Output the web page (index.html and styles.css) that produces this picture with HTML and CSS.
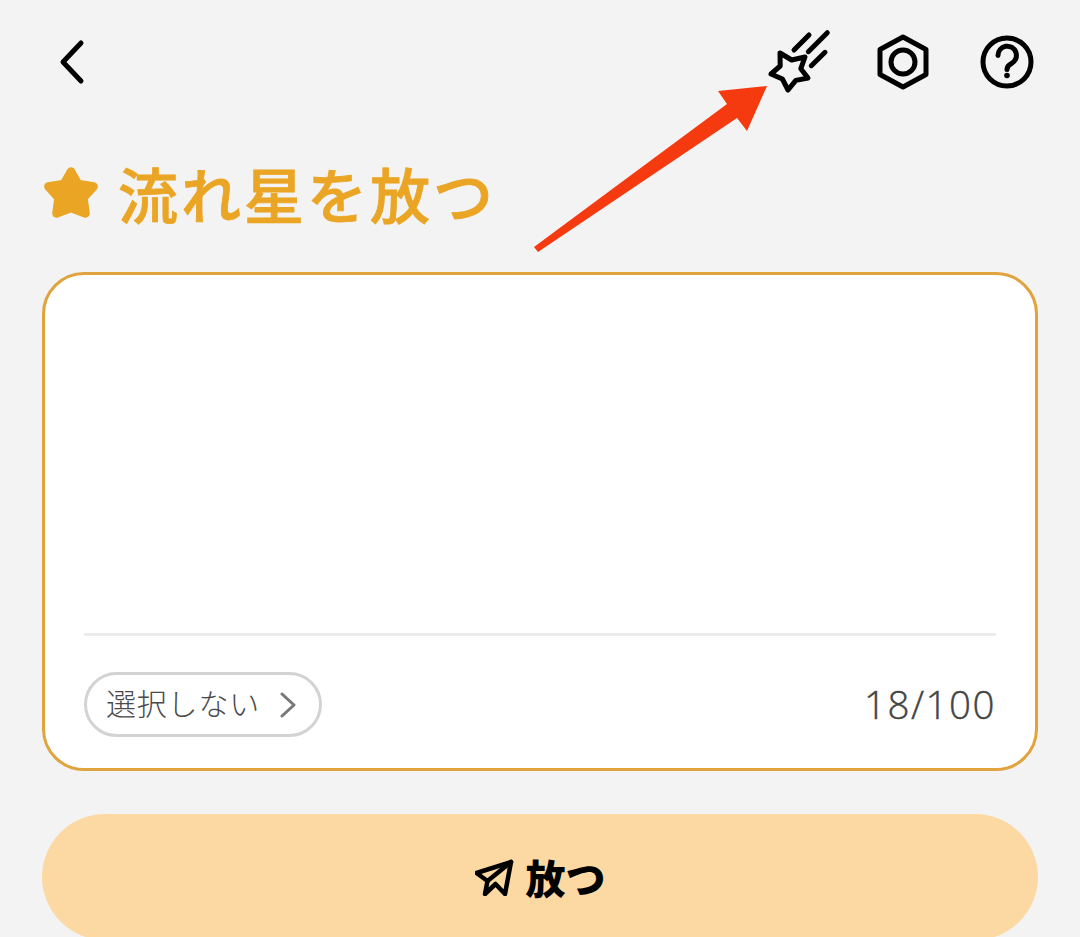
FILE: index.html
```html
<!DOCTYPE html>
<html lang="ja">
<head>
<meta charset="utf-8">
<title>流れ星を放つ</title>
<link rel="stylesheet" href="styles.css">
</head>
<body>
<main class="page">
  <header class="topbar">
    <svg class="icon" viewBox="0 0 60 60"><path d="M39 11 21 30l18 19"/></svg>
    <div class="actions">
      <svg class="icon" viewBox="0 0 60 60"><path d="M11 21 22.700 28 36 25 31.800 36.700 39 46 26.800 48.400 19 58 13.400 47 2 42 11.200 34Z"/><path d="M25 18 40 3M39.300 19.700 58.300.700M42.300 33.700 56 20.300"/></svg>
      <svg class="icon" viewBox="0 0 60 60"><path d="M30 5 53 17.500V42.500L30 55 7 42.500V17.500Z"/><circle cx="30" cy="30" r="12"/></svg>
      <svg class="icon" viewBox="0 0 60 60"><circle cx="30" cy="30" r="24"/><path d="M21 23.500a9.200 9.200 0 1 1 13.500 8c-3 1.600-4.500 3-4.500 6"/><circle class="dot" cx="30" cy="43.500" r="2.800"/></svg>
    </div>
  </header>

  <h1 class="title">
    <svg class="title-star" viewBox="0 0 54 52"><path d="M27 6 33.500 17.500 48 20 38.500 30.500 40.500 45 27 40 13.500 45 15.500 30.500 6 20 20.500 17.500Z"/></svg>
    <span>流れ星を放つ</span>
  </h1>

  <section class="card">
    <div class="input-area"></div>
    <div class="card-foot">
      <button class="pill" type="button">
        <span class="pill-label">選択しない</span>
        <svg class="pill-arrow" viewBox="0 0 16 26"><path d="M2 2 14 13 2 24"/></svg>
      </button>
      <span class="count">18/100</span>
    </div>
  </section>

  <button class="send" type="button">
    <svg class="send-icon" viewBox="0 0 40 38"><path d="M36 4 1.500 15 12.500 23 10 36 20.500 26 30 36Z"/><path d="M36 4 12.500 23"/></svg>
    <span>放つ</span>
  </button>
</main>

<svg class="callout" viewBox="0 0 1080 937"><polygon points="534,247 727,104 718,91 767,86 747,131 737,118 538,252"/></svg>
</body>
</html>
```

FILE: styles.css
```css
* { box-sizing: border-box; }

html, body {
  margin: 0;
  height: 937px;
  overflow: hidden;
  background: #f3f3f3;
}

body {
  position: relative;
  font-family: "Noto Sans CJK JP", "Noto Sans", sans-serif;
}

.page {
  display: flex;
  flex-direction: column;
  padding: 32px 42px 0;
}

.topbar {
  display: flex;
  justify-content: space-between;
  align-items: flex-start;
  height: 60px;
}

.actions {
  display: flex;
  gap: 44px;
  margin-right: 1px;
}

.icon {
  display: block;
  width: 60px;
  height: 60px;
  overflow: visible;
  fill: none;
  stroke: #000;
  stroke-width: 5;
  stroke-linecap: round;
  stroke-linejoin: round;
}

.icon .dot {
  fill: #000;
  stroke: none;
}

.title {
  display: flex;
  align-items: center;
  gap: 18px;
  height: 60px;
  margin: 71px 0 0;
  color: #eba524;
  font-size: 60px;
  font-weight: 500;
  line-height: 60px;
  letter-spacing: 3px;
  -webkit-text-stroke: 0.800px #eba524;
}

.title-star {
  display: block;
  width: 58px;
  height: 56px;
  flex: none;
  fill: #eba524;
  stroke: #eba524;
  stroke-width: 8;
  stroke-linejoin: round;
}

.card {
  display: flex;
  flex-direction: column;
  height: 499px;
  margin-top: 49px;
  padding: 0 39px;
  background: #fff;
  border: 3px solid #e0a33e;
  border-radius: 42px;
}

.input-area {
  height: 361px;
  border-bottom: 3px solid #ebebeb;
}

.card-foot {
  display: flex;
  justify-content: space-between;
  align-items: center;
  margin-top: 36px;
}

.pill {
  display: flex;
  align-items: center;
  gap: 20px;
  width: 238px;
  height: 65px;
  padding: 0 0 0 19px;
  background: #fff;
  border: 3px solid #d3d3d3;
  border-radius: 33px;
  color: #4a4a4a;
  font-family: inherit;
  font-size: 30px;
  font-weight: 300;
  letter-spacing: 0.800px;
  white-space: nowrap;
}

.pill-label {
  margin-bottom: 6px;
}

.pill-arrow {
  display: block;
  width: 16px;
  height: 26px;
  flex: none;
  fill: none;
  stroke: #777;
  stroke-width: 3;
  stroke-linecap: round;
  stroke-linejoin: round;
}

.count {
  margin-bottom: 2px;
  color: #444;
  font-family: "Open Sans", sans-serif;
  font-size: 38.500px;
  font-weight: 300;
  letter-spacing: 1.500px;
  -webkit-text-stroke: 0.400px #444;
}

.send {
  display: flex;
  align-items: center;
  justify-content: center;
  gap: 11px;
  height: 126px;
  margin-top: 43px;
  padding: 0;
  background: #fcd9a3;
  border: 0;
  border-radius: 63px;
  color: #000;
  font-family: inherit;
  font-size: 40px;
  font-weight: 900;
}

.send-icon {
  display: block;
  width: 40px;
  height: 38px;
  fill: none;
  stroke: #000;
  stroke-width: 4.500;
  stroke-linejoin: round;
  stroke-linecap: round;
}

.callout {
  position: absolute;
  left: 0;
  top: 0;
  width: 1080px;
  height: 937px;
  fill: #f63a10;
  pointer-events: none;
}
```
